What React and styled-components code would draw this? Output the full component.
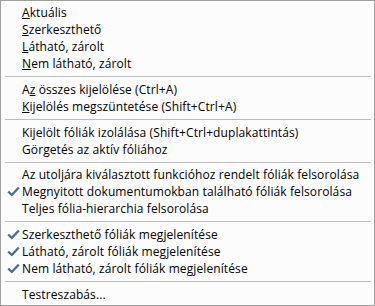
import React from 'react'
import styled, { createGlobalStyle } from 'styled-components'

const Global = createGlobalStyle`
  html, body { margin: 0; padding: 0; background: #ffffff; }
`

const Menu = styled.div`
  box-sizing: border-box;
  width: 375px;
  height: 306px;
  background: #fcfcfc;
  border: 1px solid #a0a0a0;
  padding: 3px 2px 2px 2px;
  font-family: "Open Sans", "Noto Sans", sans-serif;
  font-size: 12px;
  letter-spacing: 0.1px;
  color: #000;
  display: flex;
  flex-direction: column;
`

const Item = styled.div`
  height: 17px;
  display: flex;
  align-items: center;
  padding-left: 19px;
  position: relative;
  white-space: nowrap;
  line-height: 17px;
`

const Check = styled.svg`
  position: absolute;
  left: 4px;
  top: 3px;
  width: 13px;
  height: 11px;
`

const Separator = styled.div`
  height: 1px;
  margin: 4px 1px 4px 2px;
  background: #bcbcbc;
`

const Key = styled.span`
  text-decoration: underline;
  text-underline-offset: 1px;
`

function Tick() {
  return (
    <Check viewBox="0 0 13 11">
      <path d="M1.2 5.5 L4.8 9 L11.8 1.5" fill="none" stroke="#4d6b92" strokeWidth="2.3" strokeLinejoin="round" />
    </Check>
  )
}

function Row({ checked, children }) {
  return (
    <Item>
      {checked && <Tick />}
      <span>{children}</span>
    </Item>
  )
}

export default function App() {
  return (
    <>
      <Global />
      <Menu>
        <Row><Key>A</Key>ktuális</Row>
        <Row><Key>S</Key>zerkeszthető</Row>
        <Row><Key>L</Key>átható, zárolt</Row>
        <Row><Key>N</Key>em látható, zárolt</Row>
        <Separator />
        <Row>A<Key>z</Key> összes kijelölése (Ctrl+A)</Row>
        <Row><Key>K</Key>ijelölés megszüntetése (Shift+Ctrl+A)</Row>
        <Separator />
        <Row>Kijelölt fóliák izolálása (Shift+Ctrl+duplakattintás)</Row>
        <Row>Görgetés az aktív fóliához</Row>
        <Separator />
        <Row>Az utoljára kiválasztott funkcióhoz rendelt fóliák felsorolása</Row>
        <Row checked>Megnyitott dokumentumokban található fóliák felsorolása</Row>
        <Row>Teljes fólia-hierarchia felsorolása</Row>
        <Separator />
        <Row checked>Szerkeszthető fóliák megjelenítése</Row>
        <Row checked>Látható, zárolt fóliák megjelenítése</Row>
        <Row checked>Nem látható, zárolt fóliák megjelenítése</Row>
        <Separator />
        <Row>Testreszabás...</Row>
      </Menu>
    </>
  )
}
